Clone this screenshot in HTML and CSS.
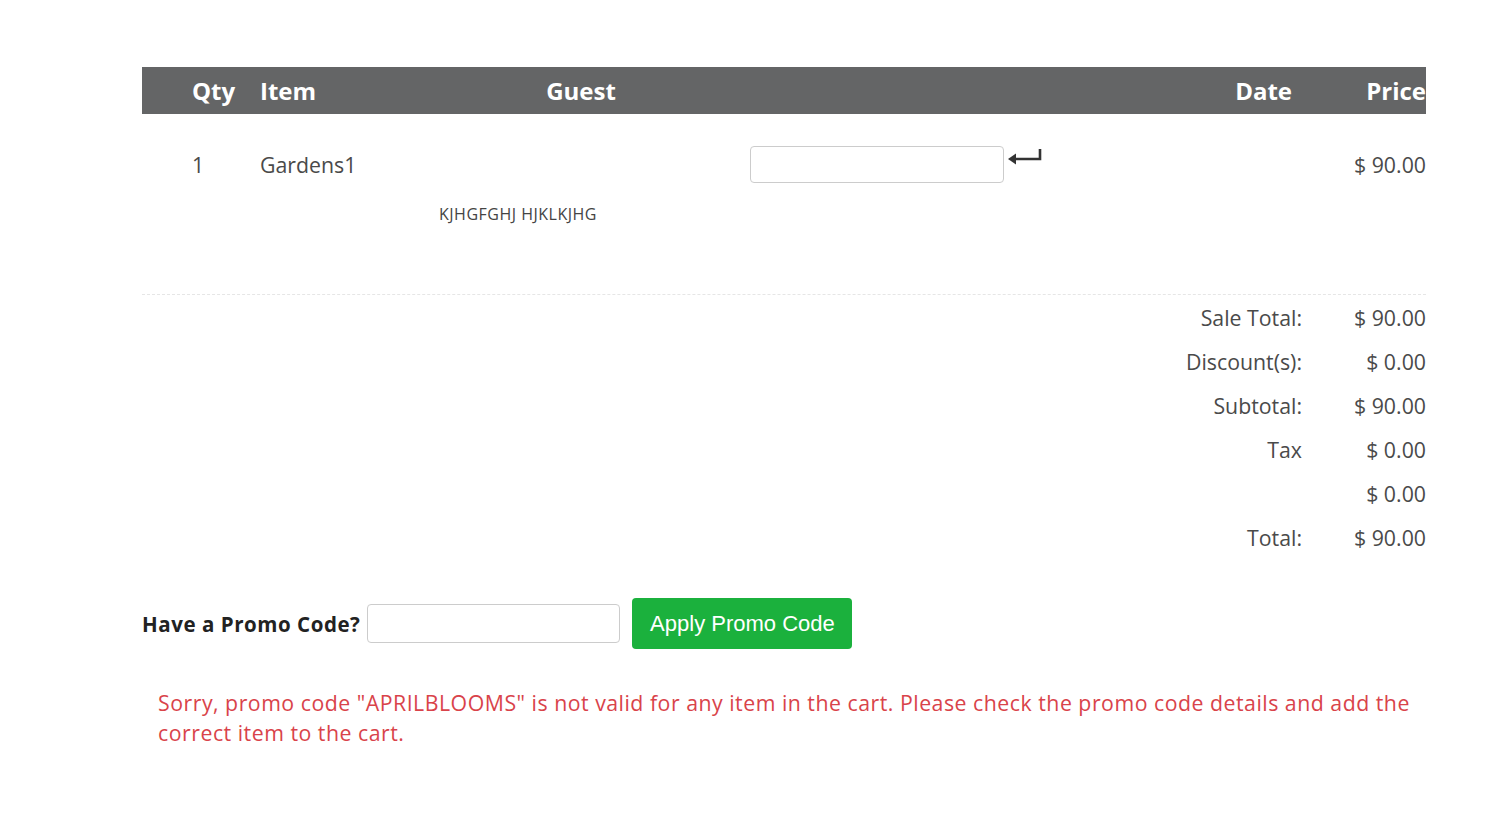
FILE: index.html
```html
<!DOCTYPE html>
<html>
<head>
<meta charset="utf-8">
<link rel="stylesheet" href="styles.css">
</head>
<body>
<div class="cart">
  <div class="head">
    <span class="h-qty">Qty</span>
    <span class="h-item">Item</span>
    <span class="h-guest">Guest</span>
    <span class="h-date">Date</span>
    <span class="h-price">Price</span>
  </div>
  <div class="line">
    <span class="c-qty">1</span>
    <span class="c-item">Gardens1</span>
    <span class="c-date">
      <input class="date-input" type="text">
      <svg class="enter" width="36" height="20" viewBox="0 0 36 20"><path d="M34 2 V12 H5" fill="none" stroke="#333" stroke-width="2.6"/><path d="M2 12 L10 6.5 L10 17.5 Z" fill="#333"/></svg>
    </span>
    <span class="c-price">$ 90.00</span>
    <span class="c-guest">KJHGFGHJ HJKLKJHG</span>
  </div>
  <div class="totals">
    <span class="t-label">Sale Total:</span><span class="t-val">$ 90.00</span>
    <span class="t-label">Discount(s):</span><span class="t-val">$ 0.00</span>
    <span class="t-label">Subtotal:</span><span class="t-val">$ 90.00</span>
    <span class="t-label">Tax</span><span class="t-val">$ 0.00</span>
    <span class="t-label"></span><span class="t-val">$ 0.00</span>
    <span class="t-label">Total:</span><span class="t-val">$ 90.00</span>
  </div>
  <div class="promo">
    <label class="promo-label">Have a Promo Code?</label>
    <input class="promo-input" type="text">
    <button class="promo-btn">Apply Promo Code</button>
  </div>
  <p class="error">Sorry, promo code "APRILBLOOMS" is not valid for any item in the cart. Please check the promo code details and add the correct item to the cart.</p>
</div>
</body>
</html>
```
FILE: styles.css
```css
* { box-sizing: border-box; }
html, body { margin: 0; padding: 0; background: #fff; }
body {
  font-family: "Open Sans", "Liberation Sans", sans-serif;
  color: #444;
}
.cart {
  width: 1284px;
  margin: 67px 0 0 142px;
}
.head {
  display: grid;
  grid-template-columns: 118px 140px 340px 1fr 134px;
  height: 47px;
  align-items: center;
  background: #646566;
  color: #fff;
  font-size: 24px;
  font-weight: 700;
}
.h-qty { padding-left: 50px; }
.h-guest { text-align: center; padding-left: 22px; }
.h-date { text-align: right; }
.h-price { text-align: right; white-space: nowrap; }

.line {
  display: grid;
  grid-template-columns: 118px 179px 311px 254px 1fr 134px;
  grid-template-rows: 37px 20px;
  row-gap: 21px;
  align-items: center;
  padding-top: 32px;
  height: 181px;
  font-size: 21.3px;
  color: #4a4a4a;
  border-bottom: 1px dashed #e6e6e6;
}
.c-qty { grid-column: 1; grid-row: 1; padding-left: 50px; }
.c-item { grid-column: 2; grid-row: 1; }
.c-date { grid-column: 4 / 6; grid-row: 1; display: flex; align-items: flex-start; height: 37px; }
.c-price { grid-column: 6; grid-row: 1; text-align: right; }
.c-guest { grid-column: 3 / 5; grid-row: 2; font-size: 16px; letter-spacing: 0.5px; color: #444; }
.date-input {
  width: 254px;
  height: 37px;
  border: 1px solid #ccc;
  border-radius: 4px;
  margin: 0;
}
.enter { margin-left: 2px; margin-top: 1px; }

.totals {
  display: grid;
  grid-template-columns: 1fr 124px;
  grid-auto-rows: 44px;
  align-items: center;
  font-size: 21.3px;
  color: #4a4a4a;
}
.t-label, .t-val { text-align: right; }

.promo {
  display: flex;
  align-items: center;
  margin-top: 39px;
}
.promo-label {
  font-size: 20.5px;
  font-weight: 700;
  letter-spacing: 0.55px;
  color: #222;
}
.promo-input {
  width: 253px;
  height: 39px;
  margin: 0 0 0 7px;
  border: 1px solid #ccc;
  border-radius: 4px;
}
.promo-btn {
  width: 220px;
  height: 51px;
  margin-left: 12px;
  background: #1bb13d;
  color: #fff;
  border: none;
  border-radius: 4px;
  font-family: "Liberation Sans", Arial, sans-serif;
  font-size: 22px;
  padding: 0;
}
.error {
  margin: 39px 0 0 0;
  padding-left: 16px;
  font-size: 21.3px;
  letter-spacing: 0.5px;
  line-height: 30px;
  color: #d9434a;
}
```
